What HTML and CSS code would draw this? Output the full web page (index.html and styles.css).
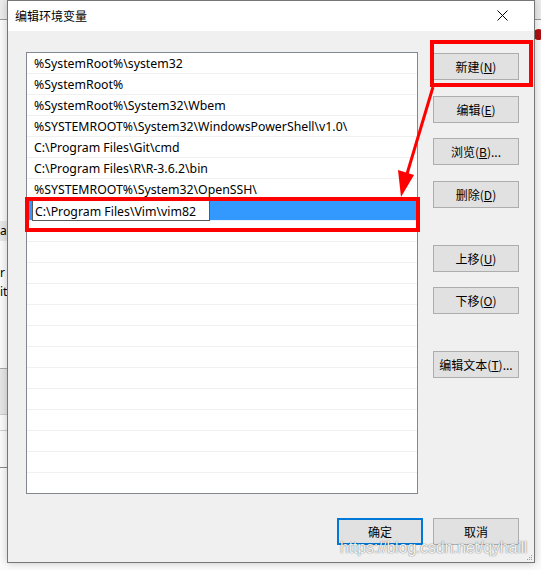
FILE: index.html
```html
<!DOCTYPE html>
<html lang="zh-CN">
<head>
<meta charset="utf-8">
<title>编辑环境变量</title>
<link rel="stylesheet" href="styles.css">
</head>
<body>
<div class="desk">
  <div class="backdrop">
    <div class="bk-top"></div>
    <div class="bk-cell bk-a">a</div>
    <div class="bk-txt bk-r">r</div>
    <div class="bk-txt bk-it">it</div>
    <div class="bk-grey"></div>
    <div class="bk-line bk-l1"></div>
    <div class="bk-line bk-l2"></div>
    <div class="bk-dot"></div>
  </div>

  <div class="dialog">
    <div class="titlebar">
      <span class="title">编辑环境变量</span>
      <svg class="close" width="11" height="11" viewBox="0 0 11 11"><path d="M0.5 0.5 L10.5 10.5 M10.5 0.5 L0.5 10.5" stroke="#000" stroke-width="1" fill="none"/></svg>
    </div>
    <div class="content">
      <div class="main">
        <div class="list">
          <div class="row">%SystemRoot%\system32</div>
          <div class="row">%SystemRoot%</div>
          <div class="row">%SystemRoot%\System32\Wbem</div>
          <div class="row">%SYSTEMROOT%\System32\WindowsPowerShell\v1.0\</div>
          <div class="row">C:\Program Files\Git\cmd</div>
          <div class="row">C:\Program Files\R\R-3.6.2\bin</div>
          <div class="row">%SYSTEMROOT%\System32\OpenSSH\</div>
          <div class="row sel"><span class="edit">C:\Program Files\Vim\vim82</span></div>
          <div class="row"></div>
          <div class="row"></div>
          <div class="row"></div>
          <div class="row"></div>
          <div class="row"></div>
          <div class="row"></div>
          <div class="row"></div>
          <div class="row"></div>
          <div class="row"></div>
          <div class="row"></div>
          <div class="row"></div>
          <div class="row"></div>
          <div class="row"></div>
        </div>
        <div class="side">
          <button class="btn b-new">新建(<u>N</u>)</button>
          <button class="btn b-s">编辑(<u>E</u>)</button>
          <button class="btn b-xs">浏览(<u>B</u>)...</button>
          <button class="btn b-s">删除(<u>D</u>)</button>
          <button class="btn b-l">上移(<u>U</u>)</button>
          <button class="btn b-xs">下移(<u>O</u>)</button>
          <button class="btn b-l">编辑文本(<u>T</u>)...</button>
        </div>
      </div>
      <div class="footer">
        <button class="btn primary">确定</button>
        <button class="btn">取消</button>
      </div>
    </div>
  </div>

  <svg class="annot" width="541" height="570" viewBox="0 0 541 570">
    <rect x="432" y="42" width="99" height="43" fill="none" stroke="#ff0000" stroke-width="4"/>
    <rect x="27" y="199" width="391" height="31" fill="none" stroke="#ff0000" stroke-width="4"/>
    <line x1="433" y1="87" x2="407" y2="174" stroke="#ff0000" stroke-width="3"/>
    <polygon points="401,197 398,170 414,175" fill="#ff0000"/>
  </svg>
  <svg class="grip" width="6" height="6" viewBox="0 0 6 6">
    <rect x="4" y="0" width="1" height="1" fill="#999"/>
    <rect x="2" y="2" width="1" height="1" fill="#999"/>
    <rect x="4" y="2" width="1" height="1" fill="#999"/>
    <rect x="0" y="4" width="1" height="1" fill="#999"/>
    <rect x="2" y="4" width="1" height="1" fill="#999"/>
    <rect x="4" y="4" width="1" height="1" fill="#999"/>
  </svg>
  <div class="watermark">https://blog.csdn.net/qyhaill</div>
</div>
</body>
</html>
```

FILE: styles.css
```css
* { box-sizing: border-box; }
html, body { margin: 0; padding: 0; }
body {
  font-family: "Noto Sans", "Noto Sans CJK SC", sans-serif;
  font-size: 12px;
  color: #000;
  background: #fff;
}
.desk {
  position: relative;
  width: 541px;
  height: 570px;
  overflow: hidden;
  background: #fbfbfb;
}

/* background window fragments */
.backdrop { position: absolute; inset: 0; z-index: 0; }
.bk-top { position: absolute; left: 0; top: 0; right: 0; height: 20px; background: #ececec; border-bottom: 1px solid #9a9a9a; }
.bk-cell { position: absolute; left: 0; top: 221px; width: 10px; height: 20px; background: #e8e8e8; font-size: 12px; line-height: 20px; }
.bk-txt { position: absolute; left: 0; font-size: 12px; }
.bk-r { top: 264px; }
.bk-it { top: 283px; }
.bk-grey { position: absolute; left: 0; top: 368px; width: 10px; height: 47px; background: #e6e6e6; border-top: 1px solid #aaa; border-bottom: 1px solid #ccc; }
.bk-line { position: absolute; left: 0; width: 10px; height: 1px; background: #cfcfcf; }
.bk-l1 { top: 430px; }
.bk-l2 { top: 467px; background: #888; }
.bk-dot { position: absolute; left: 533px; top: 29px; width: 11px; height: 11px; border-radius: 50%; background: #b01010; }

/* dialog */
.dialog {
  position: relative;
  z-index: 1;
  margin-left: 7px;
  width: 528px;
  height: 563px;
  border: 1px solid #767676;
  background: #f0f0f0;
  box-shadow: 0 0 8px rgba(0,0,0,0.22);
  display: flex;
  flex-direction: column;
}
.titlebar {
  height: 30px;
  background: #fff;
  display: flex;
  align-items: center;
  justify-content: space-between;
  padding: 0 26px 0 7px;
}
.title {
  font-family: "Noto Sans CJK SC", sans-serif;
  font-size: 12px;
  line-height: 16px;
}
.close { display: block; margin-top: -1px; }

.content {
  flex: 1;
  padding: 21px 0 0 18px;
}
.main {
  display: grid;
  grid-template-columns: 392px 86px;
  column-gap: 15px;
  align-items: start;
}
.list {
  height: 442px;
  background: #fff;
  border: 1px solid #828790;
  overflow: hidden;
}
.row {
  height: 21px;
  line-height: 20px;
  padding-top: 1px;
  border-bottom: 1px solid #f0f0f0;
  padding-left: 7px;
  white-space: nowrap;
  font-size: 12.3px;
}
.row.sel {
  background: #3399ff;
  padding-left: 5px;
  padding-top: 0;
  border-bottom-color: #e9f0f8;
}
.edit {
  display: inline-block;
  vertical-align: top;
  width: 178px;
  height: 21px;
  line-height: 19px;
  padding-top: 1px;
  background: #fff;
  border: 1px solid #5a5a5a;
  padding-left: 2px;
  color: #000;
}

.side {
  display: flex;
  flex-direction: column;
}
.btn {
  width: 86px;
  height: 27px;
  padding: 0;
  background: #e1e1e1;
  border: 1px solid #adadad;
  font-family: "Noto Sans CJK SC", "Noto Sans", sans-serif;
  font-size: 12px;
  color: #000;
  line-height: 25px;
  text-align: center;
}
.btn u { text-decoration: underline; text-underline-offset: 1px; }
.b-new { margin-top: 1px; }
.b-s { margin-top: 16px; }
.b-xs { margin-top: 15px; }
.b-l { margin-top: 37px; }

.footer {
  width: 493px;
  margin-top: 24px;
  display: flex;
  justify-content: flex-end;
  gap: 10px;
}
.btn.primary {
  width: 86px;
  border: 2px solid #0078d7;
  line-height: 23px;
}

/* annotations */
.annot {
  position: absolute;
  left: 0;
  top: 0;
  z-index: 2;
  pointer-events: none;
}
.grip {
  position: absolute;
  left: 527px;
  top: 555px;
  z-index: 2;
}
.watermark {
  position: absolute;
  left: 340px;
  top: 539px;
  z-index: 3;
  font-family: "Liberation Sans", Arial, sans-serif;
  font-size: 16px;
  letter-spacing: -0.2px;
  color: rgba(255,255,255,0.92);
  text-shadow: 0 0 1px rgba(0,0,0,0.55), 0 0 2px rgba(0,0,0,0.2);
  white-space: nowrap;
}
```
